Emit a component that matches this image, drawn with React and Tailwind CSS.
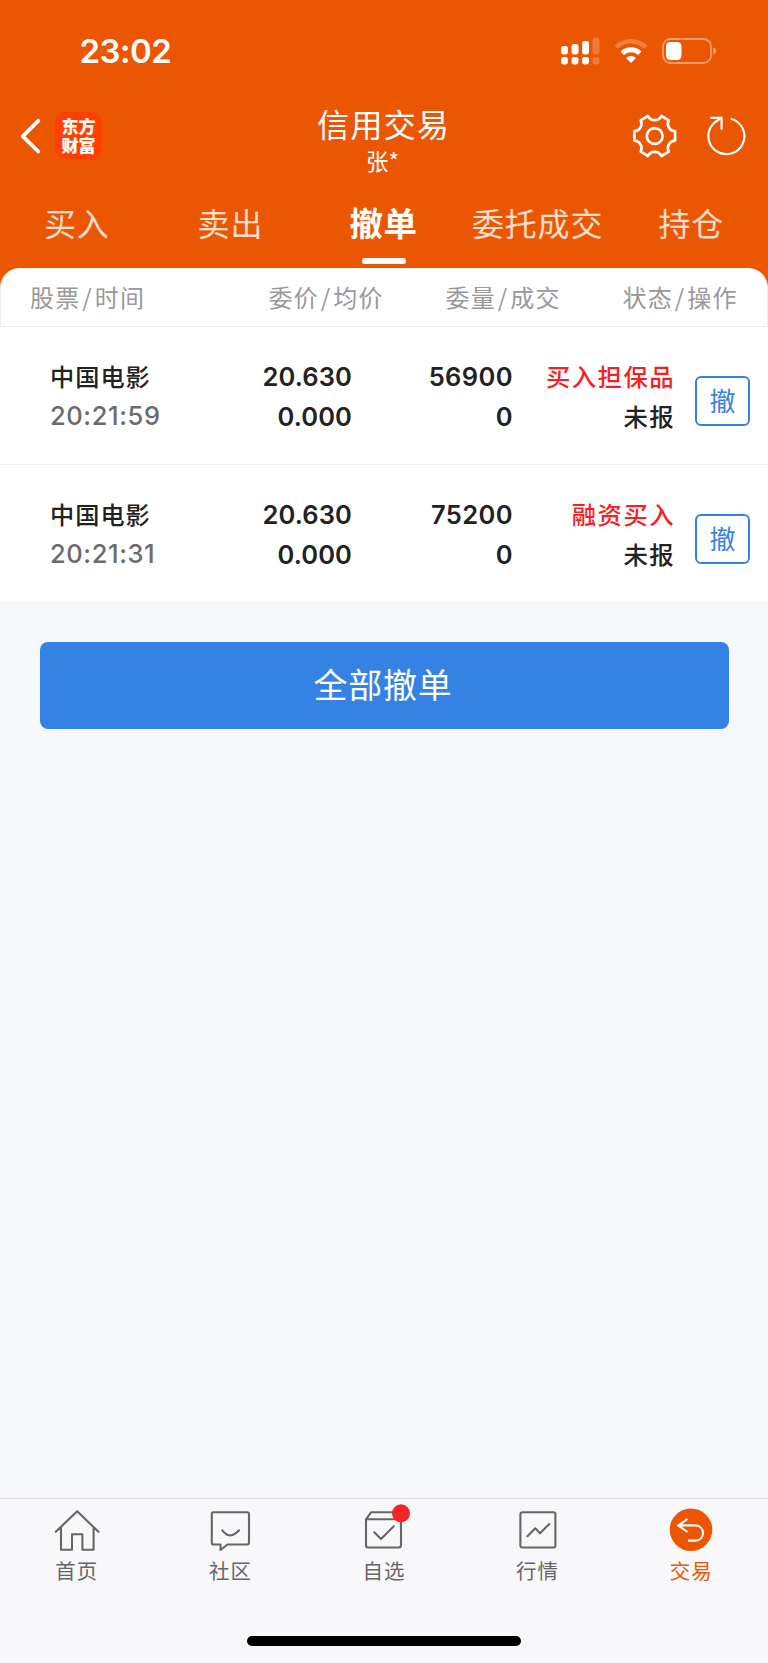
import React from "react";

const CJK = "font-['Noto_Sans_CJK_SC',sans-serif]";

const tabs = ["买入", "卖出", "撤单", "委托成交", "持仓"];

const orders = [
  { name: "中国电影", time: "20:21:59", price: "20.630", avg: "0.000", qty: "56900", done: "0", kind: "买入担保品", state: "未报" },
  { name: "中国电影", time: "20:21:31", price: "20.630", avg: "0.000", qty: "75200", done: "0", kind: "融资买入", state: "未报" },
];

function StatusBar() {
  return (
    <div className="flex h-[102px] items-center justify-between pl-[79.5px] pr-[50px]">
      <div className="font-['Inter',sans-serif] text-[33px] leading-[40px] font-semibold tracking-[-0.5px] text-white">23:02</div>
      <div className="flex items-center">
        <svg width="40" height="28" viewBox="0 0 40 28" fill="#fff">
          <rect x="1" y="9" width="7" height="8.5" rx="2.4" />
          <rect x="11.5" y="7" width="7" height="10.5" rx="2.4" />
          <rect x="22" y="4" width="7" height="13.5" rx="2.4" />
          <rect x="32.5" y="0.5" width="7" height="17" rx="2.4" opacity=".22" />
          <rect x="1" y="20" width="7" height="7.5" rx="2.4" />
          <rect x="11.5" y="20" width="7" height="7.5" rx="2.4" />
          <rect x="22" y="20" width="7" height="7.5" rx="2.4" />
          <rect x="32.5" y="20" width="7" height="7.5" rx="2.4" opacity=".22" />
        </svg>
        <svg className="ml-[14px]" width="34" height="26" viewBox="0 0 34 26" fill="none" stroke="#fff">
          <path d="M2.2 9.2A21.5 21.5 0 0 1 31.8 9.2" strokeWidth="4.6" opacity=".25" />
          <path d="M8.2 15.2A13 13 0 0 1 25.8 15.2" strokeWidth="4.8" />
          <path d="M17 25L12 20A7.3 7.3 0 0 1 22 20Z" fill="#fff" stroke="none" />
        </svg>
        <svg className="ml-[14px]" width="56" height="26" viewBox="0 0 56 26">
          <rect x="1" y="1" width="48" height="24" rx="7.5" fill="none" stroke="#fff" strokeWidth="1.8" opacity=".42" />
          <rect x="4" y="4" width="15.5" height="18" rx="4.2" fill="#fff" />
          <path d="M51.3 9.3Q54 10.3 54 13T51.3 16.7Z" fill="#fff" opacity=".5" />
        </svg>
      </div>
    </div>
  );
}

function TitleBar() {
  return (
    <div className={`${CJK} grid h-[86px] grid-cols-[1fr_auto_1fr] items-start text-white`}>
      <div className="flex items-center pt-[10px] pl-[19px]">
        <svg width="24" height="40" viewBox="0 0 24 40" fill="none" stroke="#fff" strokeWidth="3.8" strokeLinecap="round" strokeLinejoin="round">
          <path d="M19.3 4.8L3.8 20.3L19.3 35.5" />
        </svg>
        <div className="ml-[12px] flex h-[47px] w-[47px] items-center justify-center rounded-[10px] bg-[#ff4000] pb-[2px] text-[17px] leading-[19px] font-black">
          <p className="w-[34px] break-all">东方财富</p>
        </div>
      </div>
      <div className="flex flex-col items-center">
        <div className="pr-px text-[32.3px] leading-[42px] tracking-[1px]">信用交易</div>
        <div className="pr-[3px] text-[22.5px] leading-[33px]">张*</div>
      </div>
      <div className="flex items-center justify-end gap-[29px] pt-[11px] pr-[21px]">
        <svg width="46" height="46" viewBox="-22.7 -23 46 46" fill="none" stroke="#fff" strokeWidth="2.7" strokeLinejoin="round">
          <path d="M20.4 -4.6V4.6A7.6 7.6 0 0 0 14 15.6L6.8 20A7.6 7.6 0 0 0 -6.8 20L-14 15.6A7.6 7.6 0 0 0 -20.4 4.6V-4.6A7.6 7.6 0 0 0 -14 -15.6L-6.8 -20A7.6 7.6 0 0 0 6.8 -20L14 -15.6A7.6 7.6 0 0 0 20.4 -4.6Z" />
          <circle r="7.9" />
        </svg>
        <svg width="40" height="46" viewBox="-19.5 -23 40 46" fill="none" stroke="#fff" strokeWidth="2.2">
          <path d="M4.3 -17.3A18 18 0 1 1 -12.6 -12.8L-5.2 -18.2" />
          <path d="M-16.3 -18.2H-4.9V-6.3" />
        </svg>
      </div>
    </div>
  );
}

function Tabs() {
  return (
    <div className={`${CJK} grid h-[80px] grid-cols-5`}>
      {tabs.map((t) =>
        t === "撤单" ? (
          <div key={t} className="flex flex-col items-center pt-[11px] text-white">
            <div className="pr-px text-[33.5px] leading-[46px] font-bold tracking-[0.5px]">{t}</div>
            <div className="mt-[13px] h-[6px] w-[44px] rounded-full bg-white" />
          </div>
        ) : (
          <div key={t} className="pt-[11px] text-center text-[32px] leading-[46px] tracking-[0.8px] whitespace-nowrap text-white/80">
            {t}
          </div>
        )
      )}
    </div>
  );
}

function Head({ a, b, className }) {
  return (
    <div className={`flex ${className}`}>
      <span>{a}</span>
      <span className="px-[1.7px]">/</span>
      <span>{b}</span>
    </div>
  );
}

function OrderRow({ o }) {
  return (
    <div className="flex h-[138px] border-b border-[#f0f1f3] bg-white font-['Inter','Noto_Sans_CJK_SC',sans-serif] text-[25.5px] leading-[39.5px] font-semibold tracking-[0.1px] text-[#222]">
      <div className="w-[180px] pt-[29px] pl-[50px]">
        <div className={`${CJK} text-[24.2px] font-medium tracking-[1px]`}>{o.name}</div>
        <div className="font-medium tracking-[0.6px] text-[#6b6b6b]">{o.time}</div>
      </div>
      <div className="w-[172px] pt-[30px] text-right">
        <div>{o.price}</div>
        <div>{o.avg}</div>
      </div>
      <div className="w-[161px] pt-[30px] text-right tracking-[0.4px]">
        <div>{o.qty}</div>
        <div>{o.done}</div>
      </div>
      <div className={`${CJK} w-[162px] pt-[29px] text-right text-[24.4px] font-medium tracking-[1.4px]`}>
        <div className="text-[#fb1d1f]">{o.kind}</div>
        <div>{o.state}</div>
      </div>
      <button className={`${CJK} mt-[49px] ml-[20px] flex h-[50px] w-[55px] items-center justify-center rounded-[6px] border-2 border-[#3582e5] text-[26px] leading-[44px] font-normal text-[#3582e5]`}>
        <span className="-mt-[3px]">撤</span>
      </button>
    </div>
  );
}

function NavItem({ label, active, children }) {
  return (
    <div className={`flex flex-col items-center pt-[8px] ${active ? "text-[#ec5602]" : "text-[#666]"}`}>
      {children}
      <div className={`${CJK} text-[20.5px] leading-[30px] tracking-[1px]`}>{label}</div>
    </div>
  );
}

function NavIcon({ children }) {
  return (
    <svg width="48" height="48" viewBox="0 0 48 48" fill="none" stroke="currentColor" strokeWidth="2.1" strokeLinejoin="round" strokeLinecap="round" className="overflow-visible">
      {children}
    </svg>
  );
}

function BottomNav() {
  return (
    <div className="flex h-[165px] flex-col border-t border-[#dfdfe3] bg-[#f8f8fb]">
      <div className="grid h-[137px] grid-cols-5">
        <NavItem label="首页">
          <NavIcon>
            <path d="M2.8 24.8L24.2 4.2L45.4 24.8M8 20.3V42.7H19V27.2H29.4V42.7H40.6V20.3" />
          </NavIcon>
        </NavItem>
        <NavItem label="社区">
          <NavIcon>
            <path d="M7 5.3H41Q43 5.3 43 7.3V35.5Q43 37.5 41 37.5H21.5L14.5 43V37.5H7Q5.8 37.5 5.8 35.5V7.3Q5.8 5.3 7 5.3ZM16.3 23.3Q24 33.5 33 23.3" />
          </NavIcon>
        </NavItem>
        <NavItem label="自选">
          <NavIcon>
            <path d="M6 12.3L11 5.3H41V38Q41 40.5 38.8 40.5H8Q6 40.5 6 38.3V12.3H41M14.3 25.3L21 32L33.8 19.3" />
            <circle cx="41" cy="6.3" r="9" fill="#f62426" stroke="none" />
          </NavIcon>
        </NavItem>
        <NavItem label="行情">
          <NavIcon>
            <rect x="6.4" y="5.3" width="35" height="35.2" rx="2" />
            <path d="M13.5 29.3L21.3 21.3L26 26.3L35.3 17" />
          </NavIcon>
        </NavItem>
        <NavItem label="交易" active>
          <NavIcon>
            <circle cx="24" cy="22.7" r="21.3" fill="#ec5602" stroke="none" />
            <path d="M20.5 12L11.3 18.6L20.5 25M11.8 18.4H28.5A7.5 7.5 0 0 1 28.5 33.6H21" stroke="#fff" strokeWidth="2.1" strokeLinecap="butt" strokeLinejoin="miter" />
          </NavIcon>
        </NavItem>
      </div>
      <div className="mx-auto h-[10px] w-[274px] rounded-full bg-black" />
    </div>
  );
}

export default function App() {
  return (
    <div className="flex h-[1663px] w-[768px] flex-col overflow-hidden bg-[#f6f8fb]">
      <div className="bg-[#eb5602]">
        <StatusBar />
        <TitleBar />
        <Tabs />
        <div className={`${CJK} flex h-[59px] rounded-t-[20px] border border-t-0 border-[#ededed] bg-white pt-[9px] text-[24px] leading-[40px] tracking-[1.3px] whitespace-nowrap text-[#999]`}>
          <Head a="股票" b="时间" className="w-[237.5px] pl-[29px]" />
          <Head a="委价" b="均价" className="w-[177px] pl-[30px]" />
          <Head a="委量" b="成交" className="w-[177px] pl-[30px]" />
          <Head a="状态" b="操作" className="pl-[30px]" />
        </div>
      </div>
      {orders.map((o) => (
        <OrderRow key={o.time} o={o} />
      ))}
      <div className="flex-1 px-[39.5px] pt-[39px]">
        <button className={`${CJK} block h-[87px] w-full rounded-[8px] bg-[#3482e4] pr-[2px] pb-[3px] text-[34px] leading-[84px] tracking-[0.8px] text-white`}>全部撤单</button>
      </div>
      <BottomNav />
    </div>
  );
}
